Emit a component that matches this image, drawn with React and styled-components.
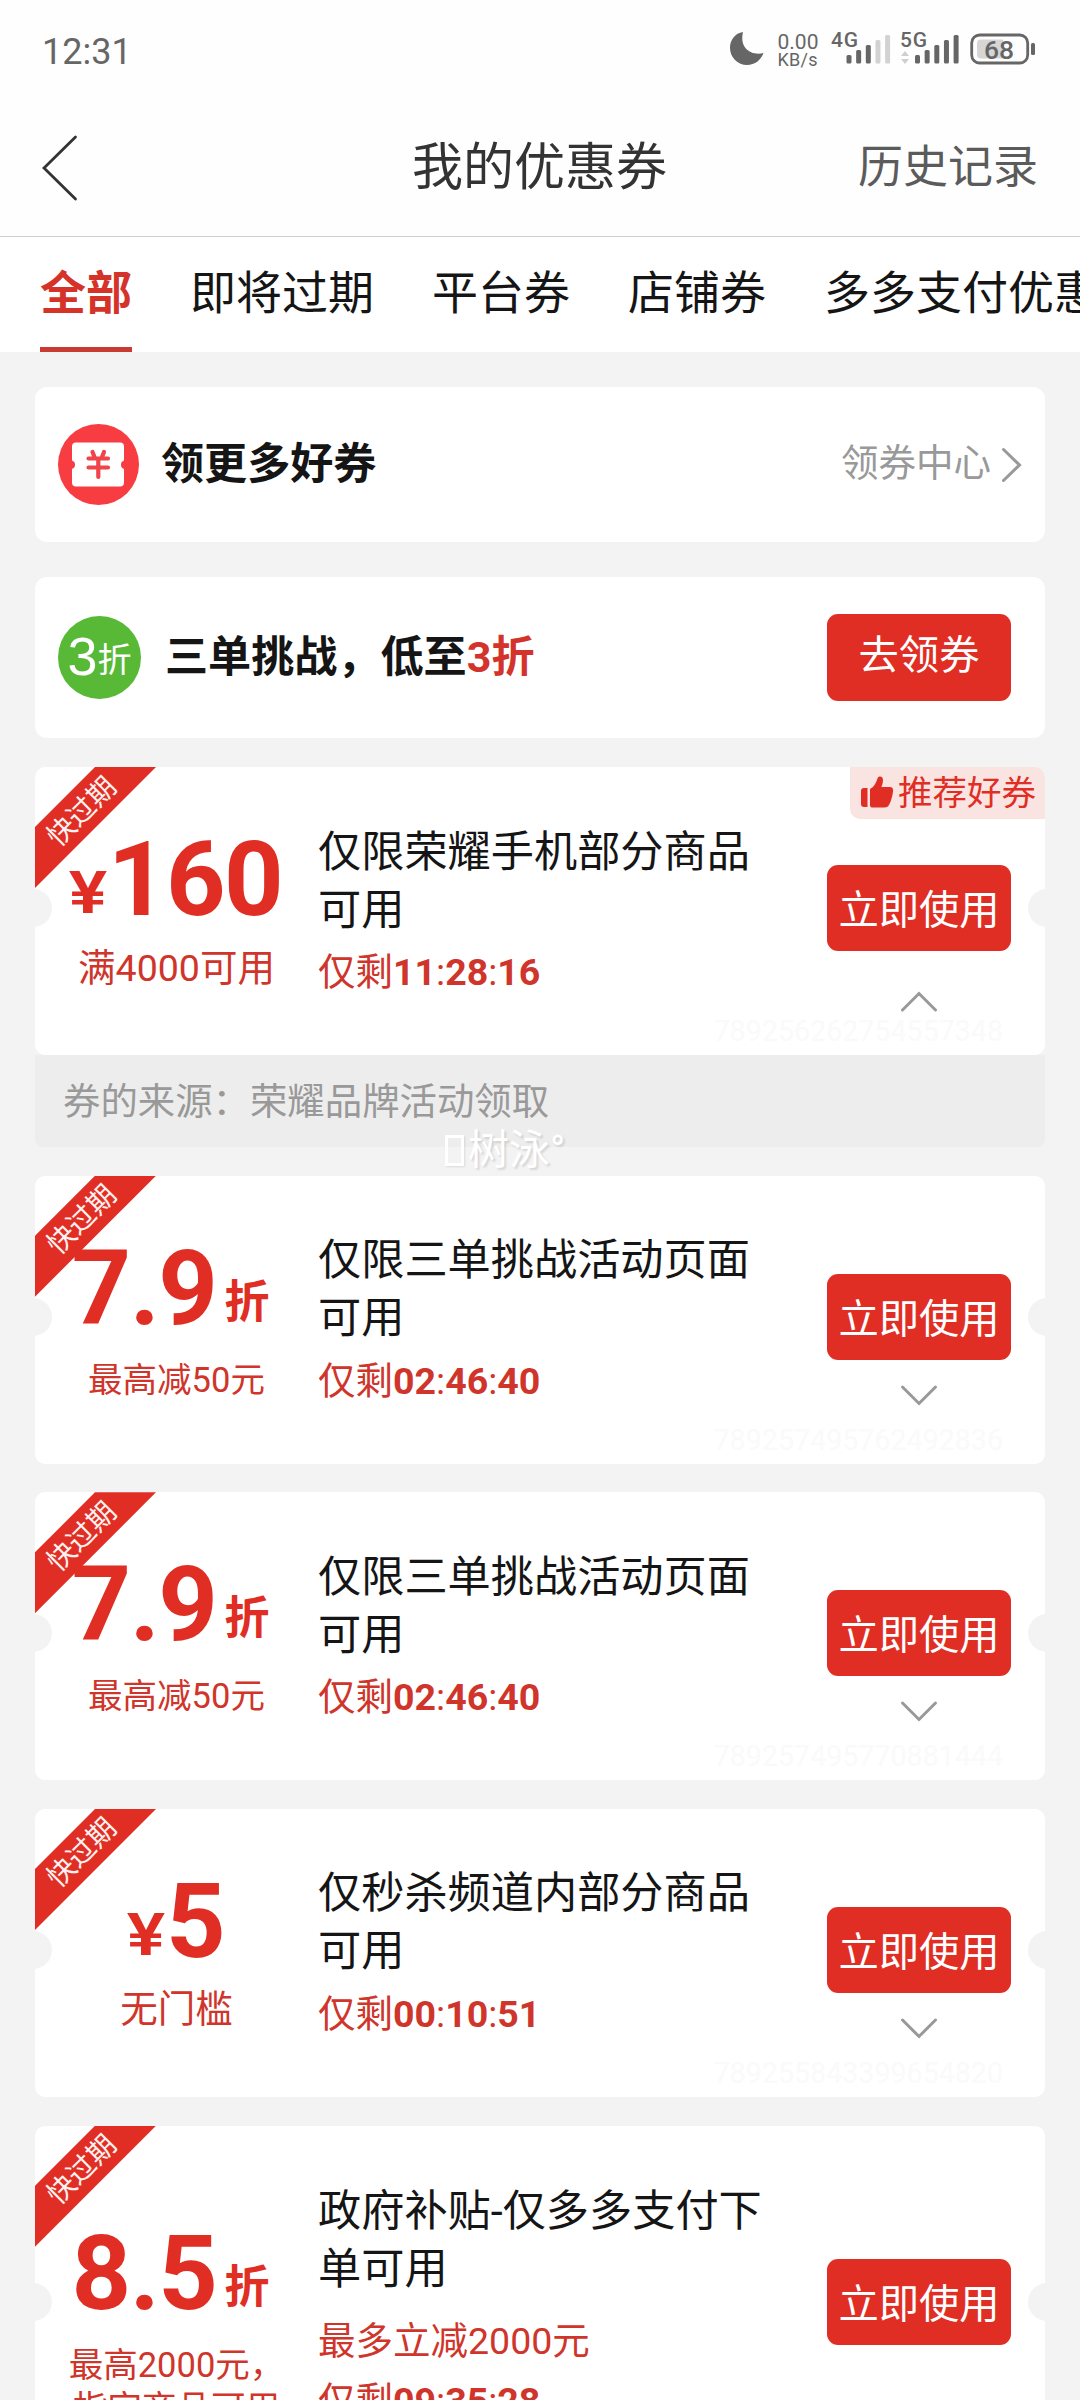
import React from 'react';
import styled, { createGlobalStyle } from 'styled-components';

const RED = '#e02e24';
const TEXT_RED = '#cf352b';

const GlobalStyle = createGlobalStyle`
  * { box-sizing: border-box; }
  body {
    margin: 0;
    background: #f3f3f3;
    font-family: Roboto, "Noto Sans CJK SC", sans-serif;
    color: #151516;
  }
`;

const Screen = styled.div`
  position: relative;
  width: 1080px;
  height: 2400px;
  overflow: hidden;
  background: #f3f3f3;
`;

const StatusBar = styled.div`
  display: flex;
  align-items: flex-start;
  justify-content: space-between;
  height: 96px;
  padding: 31px 43px 0 42px;
  background: #fefefe;
  color: #666;
`;
const Clock = styled.div`
  font-size: 36px;
  line-height: 42px;
`;
const StatusIcons = styled.svg`
  display: block;
  width: 310px;
  height: 42px;
  margin-top: -1px;
  font-family: Roboto, sans-serif;
`;

const NavBar = styled.div`
  display: grid;
  grid-template-columns: 1fr auto 1fr;
  align-items: center;
  height: 141px;
  padding: 4px 42px 0 41px;
  background: #fefefe;
  border-bottom: 1px solid #cfcfcf;
`;
const Back = styled.svg`
  display: block;
  width: 38px;
  height: 68px;
`;
const PageTitle = styled.div`
  font-size: 51px;
  line-height: 60px;
  color: #333;
`;
const History = styled.div`
  justify-self: end;
  font-size: 45px;
  line-height: 60px;
  color: #5b5b5b;
`;

const Tabs = styled.div`
  display: flex;
  gap: 58px;
  height: 115px;
  padding-left: 40px;
  background: #fff;
  overflow: hidden;
`;
const Tab = styled.div`
  flex: none;
  height: 115px;
  padding-top: 24px;
  font-size: 46px;
  line-height: 64px;
  font-weight: ${(p) => (p.$active ? 700 : 400)};
  color: ${(p) => (p.$active ? '#d5332a' : '#151516')};
  border-bottom: ${(p) => (p.$active ? '5px solid #c93a33' : 'none')};
`;

const Content = styled.div`
  display: flex;
  flex-direction: column;
  padding: 35px 35px 0;
`;

const Banner = styled.div`
  display: flex;
  align-items: center;
  height: ${(p) => p.$height}px;
  margin-bottom: ${(p) => p.$after}px;
  padding: 0 ${(p) => p.$right}px 0 23px;
  background: #fff;
  border-radius: 12px;
`;
const BannerIcon = styled.svg`
  display: block;
  flex: none;
  width: 81px;
  height: 81px;
`;
const DiscountBadge = styled.div`
  display: flex;
  align-items: baseline;
  justify-content: center;
  flex: none;
  width: 83px;
  height: 83px;
  border-radius: 50%;
  background: #58b936;
  color: #fff;
  font-family: "Liberation Sans", "Noto Sans CJK SC", sans-serif;
  font-size: 54px;
  line-height: 80px;
`;
const DiscountUnit = styled.span`
  position: relative;
  top: -3px;
  font-size: 34px;
  line-height: 1;
`;
const BannerTitle = styled.div`
  flex: 1;
  margin-left: ${(p) => p.$gap}px;
  font-size: 43.1px;
  line-height: 60px;
  font-weight: 700;
`;
const Accent = styled.span`
  color: #d4332b;
`;
const BannerLink = styled.div`
  padding-bottom: 3px;
  font-size: 37.5px;
  line-height: 56px;
  color: #999;
`;
const LinkArrow = styled.svg`
  display: block;
  width: 22px;
  height: 36px;
  margin-left: 10px;
`;

const Button = styled.div`
  display: flex;
  align-items: center;
  justify-content: center;
  flex: none;
  width: 184px;
  height: ${(p) => (p.$wide ? 87 : 86)}px;
  padding-top: ${(p) => (p.$wide ? 0 : 6)}px;
  padding-bottom: ${(p) => (p.$wide ? 3 : 0)}px;
  border-radius: 11px;
  background: ${RED};
  color: #fff;
  font-size: 40.3px;
  line-height: 60px;
  white-space: nowrap;
`;

const CouponItem = styled.div`
  margin-bottom: 28.67px;
`;
const CouponCard = styled.div`
  position: relative;
  display: flex;
  height: ${(p) => (p.$tall ? 360 : 288)}px;
  background: #fff;
  border-radius: 10px;
`;
const Notch = styled.div`
  position: absolute;
  top: ${(p) => p.$top}px;
  ${(p) => p.$side}: 0;
  width: 17px;
  height: 38px;
  overflow: hidden;
  &::before {
    content: '';
    position: absolute;
    top: 0;
    ${(p) => p.$side}: -21px;
    width: 38px;
    height: 38px;
    border-radius: 50%;
    background: #f3f3f3;
  }
`;
const Ribbon = styled.div`
  position: absolute;
  top: 0;
  left: 0;
  display: flex;
  align-items: center;
  justify-content: center;
  width: 121px;
  height: 121px;
  background: ${RED};
  clip-path: polygon(60px 0, 121px 0, 0 121px, 0 60px);
`;
const RibbonText = styled.span`
  transform: translate(-13px, -16px) rotate(-45deg);
  font-size: 28px;
  line-height: 32px;
  color: #fff1ef;
  white-space: nowrap;
`;
const ValueColumn = styled.div`
  flex: none;
  width: 283px;
  padding: ${(p) => (p.$tall ? 96 : 61)}px 30px 0;
  text-align: center;
  color: ${TEXT_RED};
`;
const Amount = styled.div`
  position: relative;
  height: 104px;
  font-size: 104px;
  line-height: 104px;
  font-weight: 700;
  letter-spacing: -1.5px;
  color: ${RED};
  white-space: nowrap;
`;
const Currency = styled.span`
  display: inline-block;
  transform: scaleX(1.2);
  margin: 0 4px 0 1px;
  font-size: 60px;
  font-weight: 600;
  line-height: 1;
  letter-spacing: 0;
  vertical-align: 2px;
`;
const Fold = styled.span`
  margin: 0 12px 0 8px;
  font-size: 45px;
  line-height: 1;
  letter-spacing: 0;
  vertical-align: 6px;
`;
const Condition = styled.div`
  margin-top: ${(p) => (p.$small ? 18 : 14.5)}px;
  font-size: ${(p) => (p.$small ? 34.5 : 37.5)}px;
  line-height: 43px;
`;
const InfoColumn = styled.div`
  flex: none;
  width: 490px;
  padding-top: ${(p) => (p.$tall ? 57.5 : 56.5)}px;
`;
const CouponTitle = styled.div`
  width: 450px;
  font-size: 43.2px;
  line-height: 58px;
`;
const Extra = styled.div`
  margin-top: 13.5px;
  font-size: 37.5px;
  line-height: 56px;
  color: ${TEXT_RED};
`;
const Timer = styled.div`
  margin-top: ${(p) => (p.$tall ? 4 : 4.5)}px;
  font-size: 37.5px;
  line-height: 56px;
  color: ${TEXT_RED};
  b { font-weight: 700; }
`;
const ActionColumn = styled.div`
  display: flex;
  flex-direction: column;
  align-items: center;
  flex: none;
  width: 222px;
  padding-top: ${(p) => (p.$tall ? 133 : 98)}px;
`;
const Chevron = styled.svg`
  display: block;
  width: 40px;
  height: 22px;
  margin-top: ${(p) => (p.$open ? 39 : 24)}px;
`;
const Serial = styled.div`
  position: absolute;
  right: 42px;
  top: 248px;
  font-size: 28.6px;
  line-height: 32px;
  color: #fafafa;
`;
const Recommend = styled.div`
  position: absolute;
  top: 0;
  right: 0;
  display: flex;
  align-items: center;
  width: 195px;
  height: 52px;
  padding-left: 11px;
  border-radius: 0 10px 0 10px;
  background: #fae4e2;
  color: ${RED};
  font-size: 34.5px;
  line-height: 50px;
  white-space: nowrap;
`;
const Thumb = styled.svg`
  display: block;
  flex: none;
  width: 33px;
  height: 32px;
  margin-top: -3px;
  margin-right: 4px;
`;
const SourceNote = styled.div`
  height: 92px;
  padding: 17px 0 0 28px;
  background: #ededed;
  border-radius: 0 0 8px 8px;
  font-size: 37.4px;
  line-height: 60px;
  color: #999;
`;
const Watermark = styled.div`
  position: absolute;
  left: 445px;
  top: 1120px;
  display: flex;
  align-items: center;
  font-size: 41px;
  line-height: 60px;
  color: #fff;
  text-shadow: 2px 2px 2px rgba(0, 0, 0, 0.12);
`;
const MissingGlyph = styled.span`
  width: 19px;
  height: 31px;
  margin-right: 4px;
  border: 3px solid #fff;
  box-shadow: 1px 1px 2px rgba(0, 0, 0, 0.1);
`;

const coupons = [
  {
    prefix: '¥', value: '160', condition: '满4000可用', title: '仅限荣耀手机部分商品可用',
    time: ['11', '28', '16'], serial: '789256262754557348', recommended: true,
    source: '券的来源：荣耀品牌活动领取',
  },
  {
    value: '7.9', suffix: '折', condition: '最高减50元', title: '仅限三单挑战活动页面可用',
    time: ['02', '46', '40'], serial: '789257495762492836',
  },
  {
    value: '7.9', suffix: '折', condition: '最高减50元', title: '仅限三单挑战活动页面可用',
    time: ['02', '46', '40'], serial: '789257495770881444',
  },
  {
    prefix: '¥', value: '5', condition: '无门槛', title: '仅秒杀频道内部分商品可用',
    time: ['00', '10', '51'], serial: '789255843399654820',
  },
  {
    value: '8.5', suffix: '折', condition: '最高2000元，指定商品可用', title: '政府补贴-仅多多支付下单可用',
    time: ['09', '35', '28'], extra: '最多立减2000元', tall: true,
  },
];

function Signal({ x, active }) {
  return [0, 1, 2, 3, 4].map((i) => (
    <rect key={i} x={x + i * 9.65} y={55 - i * 5} width="5" height={8.6 + i * 5} rx="1.5"
      fill={i < active ? '#666' : '#d2d2d2'} />
  ));
}

function Status() {
  return (
    <StatusBar>
      <Clock>12:31</Clock>
      <StatusIcons viewBox="727 30 310 42" fill="#666">
        <path d="M743 32 C735 33 730 40 730 48 A17 17 0 0 0 747 65 C755 65 761 60 763.5 53 C752 56 739 49 743 32 Z" />
        <text x="777.5" y="48.500" fontSize="21" textLength="41">0.00</text>
        <text x="777.5" y="65.500" fontSize="18" textLength="40">KB/s</text>
        <text x="831" y="46.500" fontSize="21" fontWeight="500" textLength="27">4G</text>
        <Signal x={846.5} active={3} />
        <text x="900" y="46.500" fontSize="21" fontWeight="500" textLength="27">5G</text>
        <path d="M901 56 L905 51 L909 56 Z M901 59 L905 64 L909 59 Z" fill="#cfcfcf" />
        <Signal x={915} active={5} />
        <rect x="971.7" y="35" width="56" height="28" rx="8" fill="none" stroke="#666" strokeWidth="2.8" />
        <path d="M981 39.500 H1003 V58.500 H981 A4 4 0 0 1 977 54.500 V43.500 A4 4 0 0 1 981 39.500 Z" fill="#d6d6d6" />
        <text x="999" y="58.500" fontSize="26.500" fontWeight="500" textAnchor="middle">68</text>
        <rect x="1031" y="43" width="4" height="12" rx="1.5" />
      </StatusIcons>
    </StatusBar>
  );
}

function CouponIcon() {
  return (
    <BannerIcon viewBox="0 0 81 81">
      <circle cx="40.500" cy="40.500" r="40.500" fill="#f83d42" />
      <path fill="#fff" d="M18 18.500 H62 A4 4 0 0 1 66 22.500 V36.500 A4.500 4.500 0 0 0 66 45 V58.500 A4 4 0 0 1 62 62.500 H18 A4 4 0 0 1 14 58.500 V45 A4.500 4.500 0 0 0 14 36.500 V22.500 A4 4 0 0 1 18 18.500 Z" />
      <path d="M34.500 28 L36.500 33 M46 28 L44 33 M30.500 34.500 H50 M30.500 43.500 H50 M40.300 35 V53" stroke="#f0434a" strokeWidth="4.2" strokeLinecap="round" fill="none" />
    </BannerIcon>
  );
}

function Coupon({ c }) {
  return (
    <CouponItem>
      <CouponCard $tall={c.tall}>
        <Ribbon><RibbonText>快过期</RibbonText></Ribbon>
        <Notch $side="left" $top={c.tall ? 157 : 122} />
        <Notch $side="right" $top={c.tall ? 157 : 122} />
        <ValueColumn $tall={c.tall}>
          <Amount>
            {c.prefix && <Currency>{c.prefix}</Currency>}
            {c.value}
            {c.suffix && <Fold>{c.suffix}</Fold>}
          </Amount>
          <Condition $small={!!c.suffix}>{c.condition}</Condition>
        </ValueColumn>
        <InfoColumn $tall={c.tall}>
          <CouponTitle>{c.title}</CouponTitle>
          {c.extra && <Extra>{c.extra}</Extra>}
          <Timer $tall={c.tall}>
            仅剩<b>{c.time[0]}</b>:<b>{c.time[1]}</b>:<b>{c.time[2]}</b>
          </Timer>
        </InfoColumn>
        <ActionColumn $tall={c.tall}>
          <Button>立即使用</Button>
          {!c.tall && (
            <Chevron $open={!!c.source} viewBox="0 0 40 22">
              <path d={c.source ? 'M3.500 20 L20 3.500 L36.500 20' : 'M3.500 3 L20 19.500 L36.500 3'}
                fill="none" stroke="#999" strokeWidth="3" strokeLinecap="round" />
            </Chevron>
          )}
        </ActionColumn>
        {c.serial && <Serial>{c.serial}</Serial>}
        {c.recommended && (
          <Recommend>
            <Thumb viewBox="0 0 33 32" fill={RED}>
              <path d="M3 12 H6.500 V31 H3 A3 3 0 0 1 0 28 V15 A3 3 0 0 1 3 12 Z" />
              <path d="M9 13 C13 11 15 7 16.500 2.500 C17.500 -0.500 22 0 22 4 C22 7 21 9 20.500 11 H29 C31.500 11 32.500 13 32 15.500 C31.500 20 30 25 28.500 28 C27.500 30.500 26 31.500 23.500 31.500 H12 C10 31.500 9 31 9 29 Z" />
            </Thumb>
            推荐好券
          </Recommend>
        )}
      </CouponCard>
      {c.source && <SourceNote>{c.source}</SourceNote>}
    </CouponItem>
  );
}

export default function App() {
  return (
    <Screen lang="zh-CN">
      <GlobalStyle />
      <Status />
      <NavBar>
        <Back viewBox="0 0 38 68">
          <path d="M34.500 3 L3 34 L34.500 65" fill="none" stroke="#333" strokeWidth="2.800" strokeLinecap="round" />
        </Back>
        <PageTitle>我的优惠券</PageTitle>
        <History>历史记录</History>
      </NavBar>
      <Tabs>
        <Tab $active>全部</Tab>
        <Tab>即将过期</Tab>
        <Tab>平台券</Tab>
        <Tab>店铺券</Tab>
        <Tab>多多支付优惠券</Tab>
      </Tabs>
      <Content>
        <Banner $height={155} $after={35} $right={22}>
          <CouponIcon />
          <BannerTitle $gap={22}>领更多好券</BannerTitle>
          <BannerLink>领券中心</BannerLink>
          <LinkArrow viewBox="0 0 22 36">
            <path d="M2.500 2.500 L18.500 18 L2.500 33.500" fill="none" stroke="#999" strokeWidth="3" strokeLinecap="round" />
          </LinkArrow>
        </Banner>
        <Banner $height={161} $after={29} $right={34}>
          <DiscountBadge>3<DiscountUnit>折</DiscountUnit></DiscountBadge>
          <BannerTitle $gap={24}>三单挑战，低至<Accent>3折</Accent></BannerTitle>
          <Button $wide>去领券</Button>
        </Banner>
        {coupons.map((c) => <Coupon key={c.serial || c.value} c={c} />)}
      </Content>
      <Watermark><MissingGlyph />树泳°</Watermark>
    </Screen>
  );
}
